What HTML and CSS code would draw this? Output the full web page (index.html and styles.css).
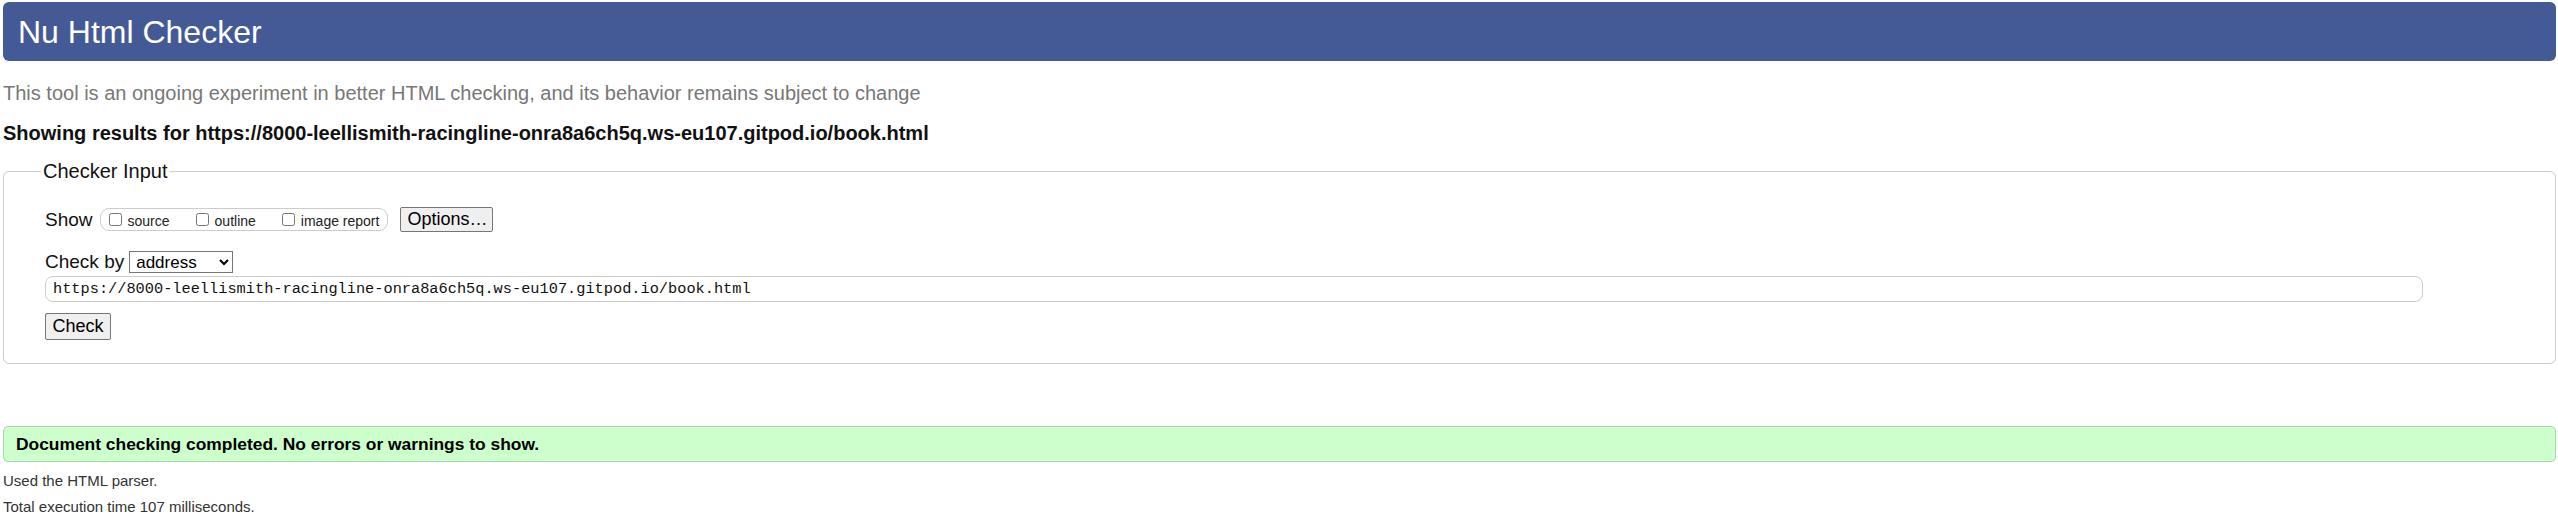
FILE: index.html
```html
<!DOCTYPE html>
<html lang="en">
<head>
<meta charset="utf-8">
<title>Showing results for https://8000-leellismith-racingline-onra8a6ch5q.ws-eu107.gitpod.io/book.html - Nu Html Checker</title>
<link rel="stylesheet" href="styles.css">
</head>
<body>
<h1 class="title">Nu Html Checker</h1>
<p class="about">This tool is an ongoing experiment in better HTML checking, and its behavior remains subject to change</p>
<p class="showing">Showing results for https://8000-leellismith-racingline-onra8a6ch5q.ws-eu107.gitpod.io/book.html</p>
<form class="checker-form">
  <fieldset class="checker">
    <legend class="checker-legend">Checker Input</legend>
    <div class="row show-row">
      <span class="row-label">Show</span>
      <span class="show-group">
        <label class="opt"><input type="checkbox" class="cb"><span>source</span></label>
        <label class="opt"><input type="checkbox" class="cb"><span>outline</span></label>
        <label class="opt"><input type="checkbox" class="cb"><span>image report</span></label>
      </span>
      <button type="button" class="btn btn-options">Options…</button>
    </div>
    <div class="row by-row">
      <span class="row-label">Check by</span>
      <select class="by-select"><option>address</option></select>
    </div>
    <input class="url" type="url" value="https://8000-leellismith-racingline-onra8a6ch5q.ws-eu107.gitpod.io/book.html">
    <div class="submit-row">
      <button type="button" class="btn btn-check">Check</button>
    </div>
  </fieldset>
</form>
<p class="success">Document checking completed. No errors or warnings to show.</p>
<p class="details first">Used the HTML parser.</p>
<p class="details">Total execution time 107 milliseconds.</p>
</body>
</html>
```

FILE: styles.css
```css
html, body {
  margin: 0;
  background: #ffffff;
}

body {
  padding: 2px 2px 0 3px;
  font-family: "Liberation Sans", Arial, sans-serif;
  color: #000;
}

.title {
  margin: 0;
  height: 59px;
  box-sizing: border-box;
  padding: 2px 0 0 15px;
  background: #435a97;
  color: #ffffff;
  font-weight: normal;
  font-size: 32px;
  line-height: 57px;
  border-radius: 6px;
}

.about {
  margin: 21px 0 0;
  font-size: 20px;
  line-height: 23px;
  color: #777777;
}

.showing {
  margin: 17px 0 0;
  font-size: 20px;
  line-height: 23px;
  font-weight: bold;
  color: #111111;
}

.checker-form {
  margin: 15px 0 0;
}

.checker {
  margin: 0;
  min-width: 0;
  border: 1px solid #cccccc;
  border-radius: 6px;
  padding: 24px 0 23px 41px;
}

.checker-legend {
  margin-left: -4px;
  padding: 0 2px;
  font-size: 20px;
  line-height: 23px;
  color: #111;
}

.row {
  display: flex;
  align-items: center;
}

.row-label {
  font-size: 19px;
  color: #111;
}

.show-row {
  height: 25px;
}

.show-group {
  display: flex;
  align-items: center;
  height: 23px;
  box-sizing: border-box;
  margin-left: 7px;
  padding: 0 8px 0 8px;
  border: 1px solid #cccccc;
  border-radius: 9px;
  gap: 26px;
}

.opt {
  display: flex;
  align-items: center;
  gap: 6px;
  font-size: 14px;
  color: #222;
}

.opt span {
  padding-top: 3px;
}

.cb {
  margin: 0;
  width: 13px;
  height: 13px;
}

.btn {
  font-family: "Liberation Sans", Arial, sans-serif;
  font-size: 18px;
  color: #000;
  background: #efefef;
  border: 1px solid #767676;
  border-radius: 2px;
  padding: 0 6px;
  margin: 0;
}

.btn-options {
  margin-left: 12px;
  width: 93px;
  height: 25px;
  line-height: 21px;
}

.by-row {
  margin-top: 18px;
  height: 24px;
}

.by-select {
  margin-left: 5px;
  width: 104px;
  height: 22px;
  font-family: "Liberation Sans", Arial, sans-serif;
  font-size: 17px;
  color: #000;
  border: 1px solid #767676;
  border-radius: 0;
  background: #fff;
  padding: 0 2px;
}

.url {
  display: block;
  margin: 2px 0 0;
  width: calc(100% - 132px);
  height: 26px;
  box-sizing: border-box;
  border: 1px solid #cccccc;
  border-radius: 8px;
  padding: 0 7px;
  font-family: "Liberation Mono", "Courier New", monospace;
  font-size: 15.3px;
  color: #111;
  background: #fff;
}

.submit-row {
  margin-top: 11px;
  display: flex;
}

.btn-check {
  width: 66px;
  height: 27px;
  line-height: 23px;
}

.success {
  margin: 62px 0 0;
  height: 36px;
  box-sizing: border-box;
  padding: 0 12px;
  background: #ccffcc;
  border: 1px solid #a8d8a8;
  border-radius: 5px;
  font-size: 17.4px;
  font-weight: bold;
  line-height: 34px;
  color: #000;
}

.details {
  margin: 6px 0 0;
  font-size: 15px;
  line-height: 20px;
  color: #333333;
}

.details.first {
  margin-top: 9px;
}
```
